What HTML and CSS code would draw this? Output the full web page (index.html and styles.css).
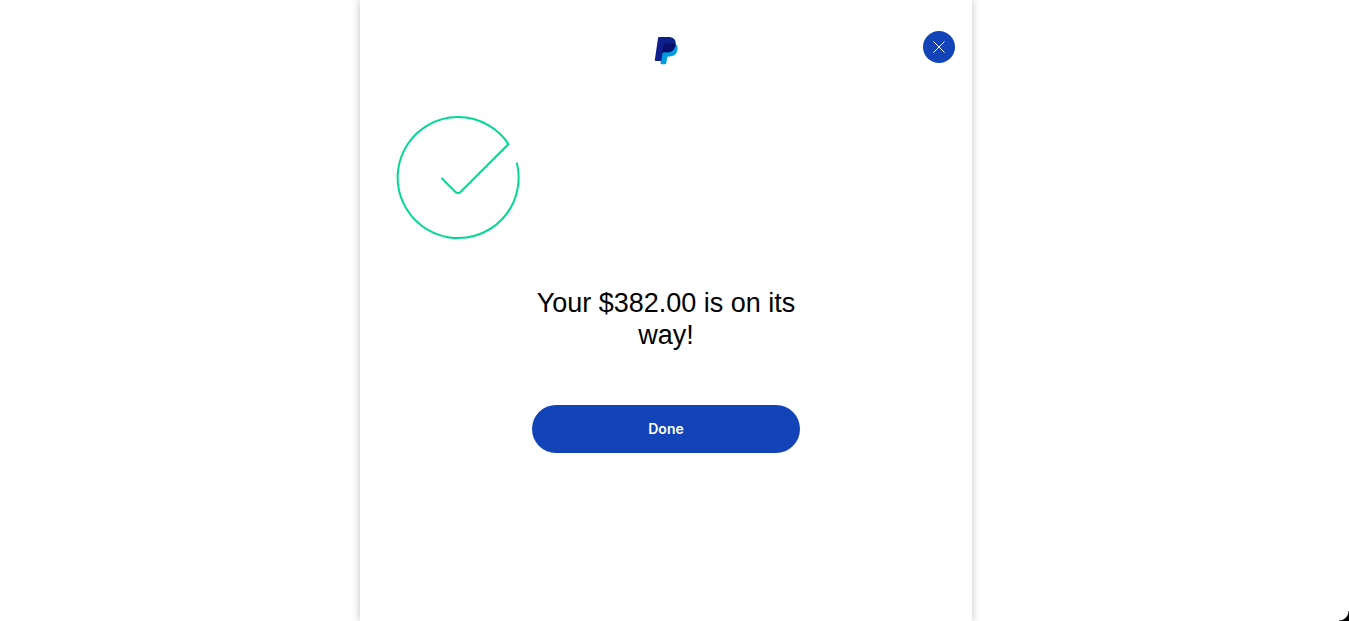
FILE: index.html
```html
<!DOCTYPE html>
<html lang="en">
<head>
  <meta charset="UTF-8" />
  <meta name="viewport" content="width=device-width, initial-scale=1.0"/>
  <title>PayPal</title>
  <link rel="stylesheet" href="styles.css">
</head>
<body>
  <main class="card">
    <header class="header">
      <svg class="logo" viewBox="0 0 24 28" role="img" aria-label="PayPal">
        <path fill="#009cde" d="M21 6.500C23.300 7.800 24 10.500 23.400 13C22.500 17.500 19.700 19.400 15.500 19.400H14.300C13.700 19.400 13.300 19.800 13.200 20.400L12.300 26.200C12.200 26.800 11.800 27.200 11.200 27.200H7.200C6.700 27.200 6.400 26.800 6.500 26.300L8 11Z"/>
        <path fill="#0f1f8a" d="M5.200 0H14C19.300 0 22.400 2.500 21.600 7.500C20.800 12.800 17.600 15.300 12.600 15.300H10C9.100 15.300 8.600 15.700 8.400 16.700L7.400 23.200C7.300 23.700 7 24 6.500 24H1.600C1 24 .700 23.600 .800 23.100L4 1.200C4.100 .400 4.500 0 5.200 0Z"/>
        <path fill="#0a0f6b" d="M21.600 6.900C21 12.700 17.800 15.300 12.600 15.300H10C9.100 15.300 8.600 15.700 8.400 16.700L7.700 21L9.500 8.600C9.700 7.100 10.400 6.400 11.700 6.400H18C19.500 6.400 20.700 6.500 21.600 6.900Z"/>
      </svg>
      <button class="close" type="button" aria-label="Close">
        <svg viewBox="0 0 12 12" aria-hidden="true">
          <path d="M.500 .500L11.500 11.500M11.500 .500L.500 11.500"/>
        </svg>
      </button>
    </header>

    <svg class="check" viewBox="0 0 148 148" aria-hidden="true">
      <path d="M133 60.500A60.500 60.500 0 1 1 124.500 41L76.500 89Q74 91 71.500 89L58 75.500"/>
    </svg>

    <section class="message">
      <h1>Your $382.00 is on its way!</h1>
      <button class="done" type="button">Done</button>
    </section>
  </main>
  <div class="corner"></div>
</body>
</html>
```
FILE: styles.css
```css
* {
  margin: 0;
  padding: 0;
  box-sizing: border-box;
}

body {
  min-height: 100vh;
  display: flex;
  justify-content: center;
  padding-right: 17px;
  background: #fff;
  color: #000;
  font-family: "Liberation Sans", Arial, sans-serif;
  overflow: hidden;
}

.card {
  width: 100%;
  max-width: 612px;
  padding: 31px 24px 24px;
  background: #fff;
  box-shadow: 0 0 8px rgba(0, 0, 0, 0.25);
}

.header {
  display: grid;
  grid-template-columns: 1fr auto 1fr;
  align-items: center;
  height: 40px;
  margin-right: -7px;
  margin-left: -7px;
}

.logo {
  grid-column: 2;
  width: 24px;
  height: 28px;
}

.close {
  justify-self: end;
  align-self: start;
  display: flex;
  align-items: center;
  justify-content: center;
  width: 32px;
  height: 32px;
  border: none;
  border-radius: 50%;
  background: #1244b8;
  cursor: pointer;
}

.close svg {
  width: 12px;
  height: 12px;
  fill: none;
  stroke: #fff;
}

.check {
  display: block;
  width: 148px;
  height: 148px;
  margin-top: 32px;
  background: #fefefe;
  fill: none;
  stroke: #00d994;
  stroke-width: 2;
  stroke-linecap: round;
}

.message {
  max-width: 268px;
  margin: 36px auto 0;
  text-align: center;
}

h1 {
  font-size: 27px;
  line-height: 32px;
  font-weight: 400;
}

.done {
  width: 100%;
  height: 48px;
  margin-top: 54px;
  padding-bottom: 2px;
  border: none;
  border-radius: 24px;
  background: #1244b8;
  color: #fff;
  font-family: Inter, "Liberation Sans", sans-serif;
  font-size: 14px;
  font-weight: 600;
  cursor: pointer;
}

.corner {
  position: fixed;
  right: 0;
  bottom: 0;
  width: 10px;
  height: 10px;
  background: radial-gradient(circle at 0 0, transparent 9px, #000 10px);
}
```
